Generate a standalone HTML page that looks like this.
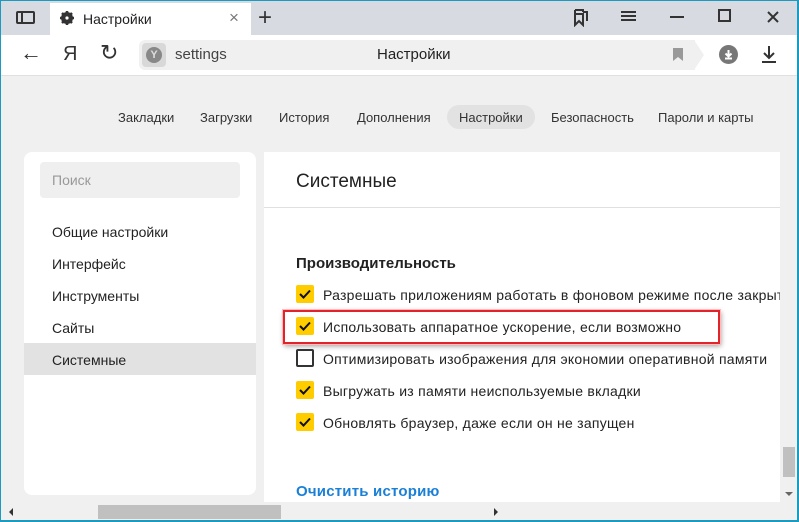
<!DOCTYPE html>
<html><head><meta charset="utf-8"><style>
*{margin:0;padding:0;box-sizing:border-box}
body{width:799px;height:522px;overflow:hidden;background:#f0f0f0;font-family:"Liberation Sans","DejaVu Sans",sans-serif;position:relative;color:#222}
.a{position:absolute}
.frame{position:absolute;left:0;top:0;width:799px;height:522px;border:1px solid #1a9bbf;border-width:1px 2px 2px 1px;pointer-events:none;z-index:10}
.t{font-size:14px;white-space:nowrap}
.w .t{letter-spacing:0.25px}
.cb{position:absolute;width:18px;height:18px;background:#fc0;border-radius:2px}
.cb svg{position:absolute;left:3px;top:4px}
</style></head><body>
<div class="a" style="left:0;top:0;width:799px;height:35px;background:#d7dbe1"></div>
<div class="a" style="left:50px;top:3px;width:201px;height:32px;background:#fff"></div>
<svg class="a" style="left:16px;top:11px" width="20" height="14"><rect x="1" y="1" width="17" height="11" rx="1" fill="none" stroke="#333" stroke-width="2"/><line x1="6" y1="1" x2="6" y2="12" stroke="#333" stroke-width="2"/></svg>
<svg class="a" style="left:60px;top:11px" width="14" height="14" viewBox="0 0 14 14"><circle cx="7" cy="7" r="4.5" fill="none" stroke="#333" stroke-width="3"/><g stroke="#333" stroke-width="2.5"><line x1="7" y1="0" x2="7" y2="14"/><line x1="0" y1="7" x2="14" y2="7"/><line x1="2" y1="2" x2="12" y2="12"/><line x1="12" y1="2" x2="2" y2="12"/></g><circle cx="7" cy="7" r="1.6" fill="#fff"/></svg>
<div class="a t" style="left:83px;top:11px;font-size:14px">Настройки</div>
<div class="a" style="left:229px;top:8px;font-size:17px;color:#777">×</div>
<div class="a" style="left:258px;top:4px;font-size:24px;color:#333">+</div>
<svg class="a" style="left:573px;top:9px" width="16" height="18"><path d="M2 1h8v2M2 1v15l4-4 4 4V5H2M10 3h4v9" fill="none" stroke="#333" stroke-width="2"/></svg>
<div class="a" style="left:621px;top:11px;width:15px;height:2px;background:#333;box-shadow:0 4px 0 #333,0 8px 0 #333"></div>
<div class="a" style="left:670px;top:16px;width:14px;height:2px;background:#333"></div>
<div class="a" style="left:718px;top:9px;width:13px;height:13px;border:2px solid #333"></div>
<svg class="a" style="left:767px;top:11px" width="12" height="12"><path d="M1 1l10 10M11 1L1 11" stroke="#333" stroke-width="2"/></svg>
<div class="a" style="left:0;top:35px;width:799px;height:41px;background:#fff;border-bottom:1px solid #e0e0e0"></div>
<div class="a" style="left:20px;top:40px;font-size:22px;color:#333">←</div>
<div class="a" style="left:63px;top:43px;font-size:20px;color:#333">Я</div>
<div class="a" style="left:100px;top:40px;font-size:22px;color:#333">↻</div>
<div class="a" style="left:139px;top:40px;width:157px;height:30px;background:#f0f0f0;border-radius:6px 0 0 6px"></div>
<div class="a" style="left:295px;top:40px;width:400px;height:30px;background:#f0f0f0"></div>
<svg class="a" style="left:694px;top:40px" width="10" height="30"><path d="M0 0L10 15L0 30Z" fill="#f0f0f0"/></svg>
<div class="a" style="left:142px;top:43px;width:24px;height:24px;background:#d8d8d8;border-radius:4px"></div>
<div class="a" style="left:146px;top:47px;width:16px;height:16px;background:#888;border-radius:50%;color:#ddd;font-size:11px;text-align:center;line-height:16px;font-weight:bold">Y</div>
<div class="a t" style="left:175px;top:46px;font-size:15px;color:#444">settings</div>
<div class="a t" style="left:377px;top:46px;font-size:15px">Настройки</div>
<svg class="a" style="left:673px;top:48px" width="10" height="13"><path d="M0 0h10v13l-5-4-5 4z" fill="#999"/></svg>
<div class="a" style="left:719px;top:45px;width:19px;height:19px;border-radius:50%;background:#777"></div>
<svg class="a" style="left:722px;top:48px" width="13" height="13"><path d="M6.5 2v6M3.5 5.5l3 3 3-3M3 10.5h7" stroke="#fff" stroke-width="2" fill="none"/></svg>
<svg class="a" style="left:761px;top:45px" width="16" height="18"><path d="M8 1v12M3 8l5 5 5-5M1 17h14" stroke="#333" stroke-width="2" fill="none"/></svg>
<div class="a" style="left:447px;top:105px;width:88px;height:24px;background:#e2e2e2;border-radius:12px"></div>
<div class="a" style="top:110px;left:0;font-size:13px;color:#333;white-space:nowrap">
<span class="a" style="left:118px">Закладки</span><span class="a" style="left:200px">Загрузки</span><span class="a" style="left:279px">История</span><span class="a" style="left:357px">Дополнения</span><span class="a" style="left:459px">Настройки</span><span class="a" style="left:551px">Безопасность</span><span class="a" style="left:658px">Пароли и карты</span></div>
<div class="a" style="left:24px;top:152px;width:232px;height:343px;background:#fff;border-radius:8px"></div>
<div class="a" style="left:40px;top:162px;width:200px;height:36px;background:#efefef;border-radius:4px"></div>
<div class="a t" style="left:52px;top:172px;color:#999">Поиск</div>
<div class="a t" style="left:52px;top:224px">Общие настройки</div>
<div class="a t" style="left:52px;top:256px">Интерфейс</div>
<div class="a t" style="left:52px;top:288px">Инструменты</div>
<div class="a t" style="left:52px;top:320px">Сайты</div>
<div class="a" style="left:24px;top:343px;width:232px;height:32px;background:#e2e2e2"></div>
<div class="a t" style="left:52px;top:352px">Системные</div>
<div class="a" style="left:264px;top:152px;width:516px;height:350px;background:#fff"></div>
<div class="a" style="left:264px;top:207px;width:516px;height:1px;background:#e0e0e0"></div>
<div class="a t" style="left:296px;top:171px;font-size:19px">Системные</div>
<div class="a t" style="left:296px;top:255px;font-size:15px;font-weight:bold;color:#222">Производительность</div>
<div class="a" style="left:283px;top:310px;width:437px;height:34px;border:2px solid #e3232a;box-shadow:0 0 0 1px #fbb,1px 2px 5px rgba(0,0,0,.4)"></div>
<div class="cb" style="left:296px;top:285px"><svg width="12" height="10"><path d="M1 5l3.5 3.5L11 1.5" stroke="#111" stroke-width="2" fill="none"/></svg></div>
<div class="cb" style="left:296px;top:317px"><svg width="12" height="10"><path d="M1 5l3.5 3.5L11 1.5" stroke="#111" stroke-width="2" fill="none"/></svg></div>
<div class="a" style="left:296px;top:349px;width:18px;height:18px;border:2px solid #333;border-radius:2px"></div>
<div class="cb" style="left:296px;top:381px"><svg width="12" height="10"><path d="M1 5l3.5 3.5L11 1.5" stroke="#111" stroke-width="2" fill="none"/></svg></div>
<div class="cb" style="left:296px;top:413px"><svg width="12" height="10"><path d="M1 5l3.5 3.5L11 1.5" stroke="#111" stroke-width="2" fill="none"/></svg></div>
<div class="a w" style="left:323px;top:0;width:457px;height:522px;overflow:hidden">
<div class="a t" style="left:0;top:287px">Разрешать приложениям работать в фоновом режиме после закрытия</div>
<div class="a t" style="left:0;top:319px">Использовать аппаратное ускорение, если возможно</div>
<div class="a t" style="left:0;top:351px">Оптимизировать изображения для экономии оперативной памяти</div>
<div class="a t" style="left:0;top:383px">Выгружать из памяти неиспользуемые вкладки</div>
<div class="a t" style="left:0;top:415px">Обновлять браузер, даже если он не запущен</div>
</div>
<div class="a t" style="left:296px;top:483px;color:#1a7fd6;font-size:15px;font-weight:bold;letter-spacing:0.2px">Очистить историю</div>
<div class="a" style="left:780px;top:152px;width:18px;height:350px;background:#f0f0f0"></div>
<div class="a" style="left:783px;top:447px;width:12px;height:30px;background:#c0c0c0"></div>
<div class="a" style="left:785px;top:492px;border:4px solid transparent;border-top:4px solid #666"></div>
<div class="a" style="left:0;top:502px;width:799px;height:20px;background:#f0f0f0"></div>
<div class="a" style="left:98px;top:505px;width:183px;height:14px;background:#c0c0c0"></div>
<div class="a" style="left:5px;top:508px;border:4px solid transparent;border-right:4px solid #333"></div>
<div class="a" style="left:494px;top:508px;border:4px solid transparent;border-left:4px solid #333"></div>
<div class="frame"></div>
</body></html>
